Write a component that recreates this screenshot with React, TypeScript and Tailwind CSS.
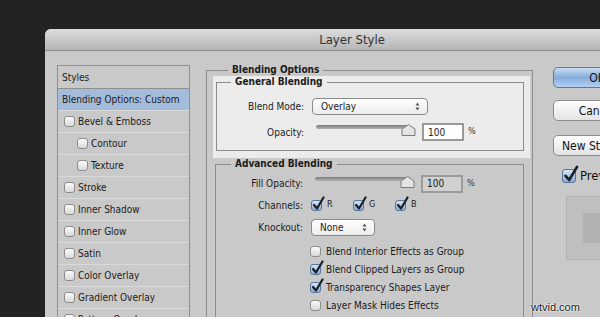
import React from 'react';

const font = { fontFamily: '"DejaVu Sans Condensed", "DejaVu Sans", sans-serif' };

// petite case à cocher façon Aqua
const Check = ({ checked = false, big = false }: { checked?: boolean; big?: boolean }) => (
  <span className={`relative inline-block shrink-0 ${big ? 'w-[14px] h-[14px]' : 'w-[11px] h-[11px]'}`}>
    <span
      className={`block w-full h-full rounded-[3px] border ${
        checked
          ? 'border-[#56759c] bg-gradient-to-b from-[#d6e3f2] to-[#8eabd0]'
          : 'border-[#8d8d8d] bg-gradient-to-b from-[#fafafa] to-[#d9d9d9]'
      }`}
    />
    {checked && (
      <svg
        className="absolute left-[1px] top-[-4px]"
        width={big ? 16 : 13}
        height={big ? 18 : 15}
        viewBox="0 0 13 15"
      >
        <path d="M2 9 L5 12.5 L11.5 1.5" fill="none" stroke="#16202c" strokeWidth="2.2" strokeLinecap="round" strokeLinejoin="round" />
      </svg>
    )}
  </span>
);

const Select = ({ value, width }: { value: string; width: string }) => (
  <div
    className={`${width} h-[17px] rounded-[4px] border border-[#8a8a8a] bg-gradient-to-b from-white to-[#ececec] flex items-center justify-between pl-[8px] pr-[7px] text-[10px] text-[#1b1b1b]`}
  >
    <span>{value}</span>
    <svg width="5" height="9" viewBox="0 0 5 9">
      <path d="M2.5 0.5 L4.5 3.5 L0.5 3.5 Z M2.5 8.5 L4.5 5.5 L0.5 5.5 Z" fill="#555" />
    </svg>
  </div>
);

const Slider = ({ value, light = false }: { value: string; light?: boolean }) => (
  <div className="flex items-center">
    <div className="relative w-[104px] h-[18px]">
      <div className="absolute left-[4px] top-[2px] w-[95px] h-[4px] rounded-full bg-gradient-to-b from-[#7d7d7d] to-[#b4b4b4]" />
      <svg className="absolute left-[89px] top-[1px]" width="15" height="12" viewBox="0 0 15 12">
        <path d="M7.5 0.5 L14 5 L14 11.5 L1 11.5 L1 5 Z" fill="#e4e4e4" stroke="#7b7b7b" strokeWidth="1" />
      </svg>
    </div>
    <div
      className={`ml-[6px] w-[42px] h-[18px] border-2 border-[#9a9a9a] flex items-center pl-[4px] text-[10px] text-[#1b1b1b] ${
        light ? 'bg-white' : 'bg-[#d0d0d0]'
      }`}
    >
      {value}
    </div>
    <span className="ml-[4px] text-[9px] text-[#333]">%</span>
  </div>
);

const Row = ({ label, children, h }: { label: string; children: React.ReactNode; h: string }) => (
  <div className={`flex items-center ${h}`}>
    <span className="w-[87px] text-right text-[10px] text-[#1b1b1b]">{label}</span>
    <div className="ml-[8px] flex items-center">{children}</div>
  </div>
);

const styleItems = [
  { label: 'Bevel & Emboss', indent: false },
  { label: 'Contour', indent: true },
  { label: 'Texture', indent: true },
  { label: 'Stroke', indent: false },
  { label: 'Inner Shadow', indent: false },
  { label: 'Inner Glow', indent: false },
  { label: 'Satin', indent: false },
  { label: 'Color Overlay', indent: false },
  { label: 'Gradient Overlay', indent: false },
  { label: 'Pattern Overlay', indent: false },
];

const advancedChecks = [
  { label: 'Blend Interior Effects as Group', checked: false },
  { label: 'Blend Clipped Layers as Group', checked: true },
  { label: 'Transparency Shapes Layer', checked: true },
  { label: 'Layer Mask Hides Effects', checked: false },
  { label: 'Vector Mask Hides Effects', checked: false },
];

export default function App() {
  return (
    <div className="relative w-[600px] h-[317px] overflow-hidden bg-[#232323] pl-[45px] pt-[29px]" style={font}>
      <div className="w-[614px] h-[300px] rounded-tl-[6px] overflow-hidden bg-[#c9c9c9] flex flex-col">
        {/* barre de titre */}
        <div className="h-[22px] shrink-0 border-b border-[#8c8c8c] bg-gradient-to-b from-[#dcdcdc] to-[#b6b6b6] flex items-center justify-center text-[13px] text-[#333]">
          Layer Style
        </div>

        <div className="flex items-start pl-[12px] pt-[13px]">
          {/* liste des styles */}
          <div className="mt-[1px] w-[133px] h-[300px] border border-[#8f8f8f] text-[10px] text-[#1b1b1b]">
            <div className="h-[23px] flex items-center pl-[4px] border-b border-[#8f8f8f]">Styles</div>
            <div className="h-[22px] flex items-center pl-[4px] bg-[#a4bcdb] border-b border-[#dadada]">
              Blending Options: Custom
            </div>
            {styleItems.map(item => (
              <div
                key={item.label}
                className={`h-[22px] flex items-center gap-[3px] border-b border-[#dadada] ${item.indent ? 'pl-[19px]' : 'pl-[6px]'}`}
              >
                <Check />
                <span>{item.label}</span>
              </div>
            ))}
          </div>

          {/* options de fusion */}
          <fieldset className="ml-[16px] w-[327px] h-[300px] border border-[#8c8c8c] pl-[6px] pr-[2px]">
            <legend className="ml-[15px] px-[4px] text-[10px] leading-[12px] font-bold text-[#1b1b1b]">Blending Options</legend>

            <div className="bg-[#ececec] pl-[3px] pr-[6px] pb-[7px]">
              <fieldset className="border border-[#8c8c8c] pt-[10px] pb-[9px]">
                <legend className="ml-[14px] px-[4px] text-[10px] leading-[12px] font-bold text-[#1b1b1b]">General Blending</legend>
                <Row label="Blend Mode:" h="h-[17px]">
                  <Select value="Overlay" width="w-[116px]" />
                </Row>
                <div className="h-[8px]" />
                <Row label="Opacity:" h="h-[18px]">
                  <Slider value="100" light />
                </Row>
              </fieldset>
            </div>

            <div className="pl-[2px] pr-[6px]">
              <fieldset className="border border-[#8c8c8c] pt-[4px] h-[200px]">
                <legend className="ml-[15px] px-[4px] text-[10px] leading-[12px] font-bold text-[#1b1b1b]">Advanced Blending</legend>
                <Row label="Fill Opacity:" h="h-[19px]">
                  <Slider value="100" />
                </Row>
                <div className="h-[5px]" />
                <Row label="Channels:" h="h-[14px]">
                  <div className="flex items-center gap-[5px] text-[9px] text-[#1b1b1b]">
                    <Check checked />
                    <span className="w-[21px]">R</span>
                    <Check checked />
                    <span className="w-[21px]">G</span>
                    <Check checked />
                    <span>B</span>
                  </div>
                </Row>
                <div className="h-[7px]" />
                <Row label="Knockout:" h="h-[17px]">
                  <Select value="None" width="w-[64px]" />
                </Row>
                <div className="h-[6px]" />
                <div className="pl-[94px] flex flex-col">
                  {advancedChecks.map(c => (
                    <div key={c.label} className="h-[18px] flex items-center gap-[5px] text-[10px] text-[#1b1b1b]">
                      <Check checked={c.checked} />
                      <span>{c.label}</span>
                    </div>
                  ))}
                </div>
              </fieldset>
            </div>
          </fieldset>

          {/* boutons */}
          <div className="ml-[20px] mt-[3px] flex flex-col text-[12px] text-[#111]">
            <div className="w-[88px] h-[21px] rounded-[5px] border border-[#5a7aa6] bg-gradient-to-b from-[#c9dcf3] via-[#86acdc] to-[#b3cff1] flex items-center justify-center">
              OK
            </div>
            <div className="mt-[12px] w-[88px] h-[21px] rounded-[5px] border border-[#8c8c8c] bg-gradient-to-b from-white to-[#e3e3e3] flex items-center justify-center">
              Cancel
            </div>
            <div className="mt-[14px] w-[88px] h-[21px] rounded-[5px] border border-[#8c8c8c] bg-gradient-to-b from-white to-[#e3e3e3] flex items-center pl-[8px]">
              New Style...
            </div>
            <div className="mt-[10px] ml-[9px] flex items-center gap-[4px] text-[13px]">
              <Check checked big />
              <span>Preview</span>
            </div>
            <div className="mt-[10px] ml-[13px] w-[64px] h-[64px] border border-[#b3b3b3] bg-[#bfbfbf] flex items-center justify-center">
              <div className="w-[30px] h-[30px] bg-[#b2b2b2]" />
            </div>
          </div>
        </div>
      </div>

      {/* filigrane */}
      <span
        className="absolute left-[531px] top-[299px] text-[11px] text-[#1a1a1a]"
        style={{ fontFamily: '"Liberation Sans", Arial, sans-serif', textShadow: '0 0 2px #fff, 0 0 2px #fff' }}
      >
        wtvid.com
      </span>
    </div>
  );
}
